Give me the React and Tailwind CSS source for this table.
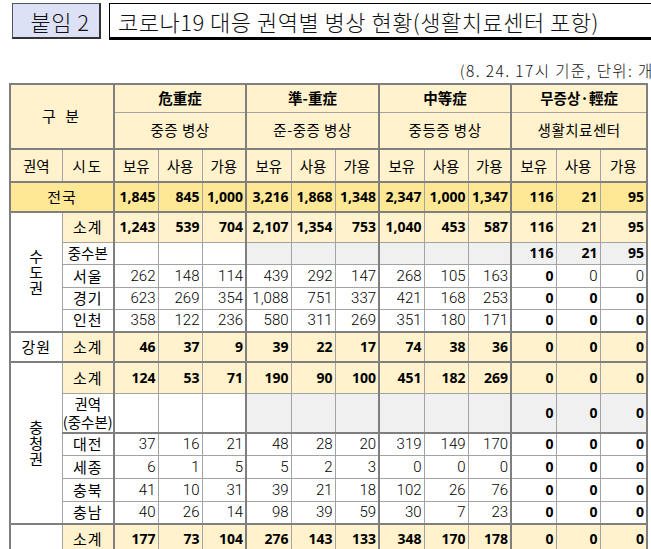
import React from "react";

const KR = "font-['Noto_Sans_CJK_KR',sans-serif]";
const NUMB = "font-['Open_Sans','Noto_Sans_CJK_KR',sans-serif] font-bold text-[14px]";
const NUMT = "font-['Roboto','Noto_Sans_CJK_KR',sans-serif] font-light text-[15px]";

const THICK_L = [
  "border-l-2 border-l-[#7f7f7f]", "", "",
  "border-l-2 border-l-[#7f7f7f]", "", "",
  "border-l-2 border-l-[#7f7f7f]", "", "",
  "border-l-2 border-l-[#7f7f7f]", "", "",
];

const TD = "border border-[#a3a3a3] p-0";
const TOPT = "border-t-2 border-t-[#7f7f7f]";

const HDR = "bg-[#fff2cc]";
const TOT = "bg-[#fee795]";
const SUB = "bg-[#fff2cc]";
const GRAY = "bg-[#f0f0f0]";

function NumCells({ vals, kind, top, boldMask }) {
  return vals.map((v, i) => {
    let bg = "bg-white";
    let bold = true;
    if (kind === "total") bg = TOT;
    else if (kind === "sub") bg = SUB;
    else if (kind === "hq") bg = i < 3 ? "bg-white" : GRAY;
    else {
      bold = boldMask ? boldMask[i] : i >= 9;
    }
    return (
      <td
        key={i}
        className={`${TD} ${THICK_L[i]} ${top ? TOPT : ""} ${bg} text-right pr-[2px] leading-[16px] ${bold ? NUMB : NUMT} text-black`}
      >
        {v}
      </td>
    );
  });
}

const seoulMask = [false, false, false, false, false, false, false, false, false, true, false, false];

function Sido({ children, top }) {
  return (
    <td className={`${TD} ${top ? TOPT : ""} bg-white text-center text-[15px] leading-[16px] tracking-[1px]`}>{children}</td>
  );
}

function Vertical({ chars, extra = "" }) {
  return (
    <div className={`flex flex-col items-center ${extra}`}>
      {chars.map((c, i) => (
        <span key={i} className="block text-[15px] leading-[16px]">{c}</span>
      ))}
    </div>
  );
}

export default function App() {
  return (
    <div className="w-[651px] h-[549px] overflow-hidden bg-white">
      <div className="w-[670px] pt-[3px]">
        {/* Title row */}
        <div className="flex items-start gap-[8px] pl-[12px]">
          <div className="w-[89px] h-[36px] bg-[#dde1f5] border border-[#555] border-r-2 border-b-2 border-r-[#333] border-b-[#333] flex items-center justify-center pl-[8px]">
            <span className={`${KR} font-light text-[22px] leading-none text-[#111] tracking-[0.5px]`}>붙임 2</span>
          </div>
          <div className="flex-1 h-[37px] bg-white border border-black border-b-[3px] flex items-center pl-[8px]">
            <span className={`${KR} font-light text-[22px] leading-none text-[#111] whitespace-nowrap tracking-[0.5px]`}>
              코로나19 대응 권역별 병상 현황(생활치료센터 포항)
            </span>
          </div>
        </div>

        {/* Subtitle */}
        <div className="flex justify-end h-[43px] items-end pb-[5px] pr-[10px]">
          <span className={`${KR} font-light text-[15.5px] leading-none text-[#111] whitespace-nowrap tracking-[1.4px]`}>
            (8. 24. 17시 기준, 단위: 개)
          </span>
        </div>

        {/* Table */}
        <div className="pl-[9px]">
          <table className="border-collapse table-fixed w-[637px] border-2 border-[#7f7f7f]">
            <colgroup>
              <col className="w-[52px]" />
              <col className="w-[52px]" />
              <col className="w-[44px]" />
              <col className="w-[44px]" />
              <col className="w-[44px]" />
              <col className="w-[45px]" />
              <col className="w-[44px]" />
              <col className="w-[44px]" />
              <col className="w-[45px]" />
              <col className="w-[44px]" />
              <col className="w-[43px]" />
              <col className="w-[45px]" />
              <col className="w-[44px]" />
              <col className="w-[47px]" />
            </colgroup>
            <tbody className={`${KR} text-[14.5px] text-black`}>
              <tr className="h-[28px]">
                <td colSpan={2} rowSpan={2} className={`${TD} ${HDR} text-center text-[15px] tracking-[3px]`}>구 분</td>
                <td colSpan={3} className={`${TD} ${HDR} ${THICK_L[0]} text-center font-bold`}>危重症</td>
                <td colSpan={3} className={`${TD} ${HDR} ${THICK_L[3]} text-center font-bold`}>準-重症</td>
                <td colSpan={3} className={`${TD} ${HDR} ${THICK_L[6]} text-center font-bold`}>中等症</td>
                <td colSpan={3} className={`${TD} ${HDR} ${THICK_L[9]} text-center font-bold`}>무증상·輕症</td>
              </tr>
              <tr className="h-[37px]">
                <td colSpan={3} className={`${TD} ${HDR} ${THICK_L[0]} text-center tracking-[0.5px]`}>중증 병상</td>
                <td colSpan={3} className={`${TD} ${HDR} ${THICK_L[3]} text-center tracking-[0.5px]`}>준-중증 병상</td>
                <td colSpan={3} className={`${TD} ${HDR} ${THICK_L[6]} text-center tracking-[0.5px]`}>중등증 병상</td>
                <td colSpan={3} className={`${TD} ${HDR} ${THICK_L[9]} text-center tracking-[0.5px]`}>생활치료센터</td>
              </tr>
              <tr className="h-[33px]">
                <td className={`${TD} ${HDR} ${TOPT} text-center`}>권역</td>
                <td className={`${TD} ${HDR} ${TOPT} text-center tracking-[2px]`}>시도</td>
                {["보유", "사용", "가용", "보유", "사용", "가용", "보유", "사용", "가용", "보유", "사용", "가용"].map((t, i) => (
                  <td key={i} className={`${TD} ${HDR} ${TOPT} ${THICK_L[i]} text-center`}>{t}</td>
                ))}
              </tr>

              {/* 전국 */}
              <tr className="h-[30px]">
                <td colSpan={2} className={`${TD} ${TOT} ${TOPT} text-center text-[15px] tracking-[1px]`}>전국</td>
                <NumCells kind="total" top vals={["1,845", "845", "1,000", "3,216", "1,868", "1,348", "2,347", "1,000", "1,347", "116", "21", "95"]} />
              </tr>

              {/* 수도권 */}
              <tr className="h-[30px]">
                <td rowSpan={5} className={`${TD} ${TOPT} bg-white text-center`}>
                  <Vertical chars={["수", "도", "권"]} />
                </td>
                <td className={`${TD} ${TOPT} ${SUB} text-center text-[15px] tracking-[1px]`}>소계</td>
                <NumCells kind="sub" top vals={["1,243", "539", "704", "2,107", "1,354", "753", "1,040", "453", "587", "116", "21", "95"]} />
              </tr>
              <tr className="h-[22px]">
                <td className={`${TD} bg-white text-center text-[14.5px] leading-[16px]`}>중수본</td>
                <NumCells kind="hq" vals={["", "", "", "", "", "", "", "", "", "116", "21", "95"]} />
              </tr>
              <tr className="h-[23px]">
                <Sido>서울</Sido>
                <NumCells kind="data" boldMask={seoulMask} vals={["262", "148", "114", "439", "292", "147", "268", "105", "163", "0", "0", "0"]} />
              </tr>
              <tr className="h-[22px]">
                <Sido>경기</Sido>
                <NumCells kind="data" vals={["623", "269", "354", "1,088", "751", "337", "421", "168", "253", "0", "0", "0"]} />
              </tr>
              <tr className="h-[23px]">
                <Sido>인천</Sido>
                <NumCells kind="data" vals={["358", "122", "236", "580", "311", "269", "351", "180", "171", "0", "0", "0"]} />
              </tr>

              {/* 강원 */}
              <tr className="h-[30px]">
                <td className={`${TD} ${TOPT} bg-white text-center text-[15px] tracking-[1px]`}>강원</td>
                <td className={`${TD} ${TOPT} ${SUB} text-center text-[15px] tracking-[1px]`}>소계</td>
                <NumCells kind="sub" top vals={["46", "37", "9", "39", "22", "17", "74", "38", "36", "0", "0", "0"]} />
              </tr>

              {/* 충청권 */}
              <tr className="h-[31px]">
                <td rowSpan={6} className={`${TD} ${TOPT} bg-white text-center`}>
                  <Vertical chars={["충", "청", "권"]} />
                </td>
                <td className={`${TD} ${TOPT} ${SUB} text-center text-[15px] tracking-[1px]`}>소계</td>
                <NumCells kind="sub" top vals={["124", "53", "71", "190", "90", "100", "451", "182", "269", "0", "0", "0"]} />
              </tr>
              <tr className="h-[40px]">
                <td className={`${TD} bg-white text-center text-[14.5px] leading-[18px]`}>
                  권역
                  <br />
                  (중수본)
                </td>
                <NumCells kind="hq" vals={["", "", "", "", "", "", "", "", "", "0", "0", "0"]} />
              </tr>
              <tr className="h-[22px]">
                <Sido top>대전</Sido>
                <NumCells kind="data" top vals={["37", "16", "21", "48", "28", "20", "319", "149", "170", "0", "0", "0"]} />
              </tr>
              <tr className="h-[23px]">
                <Sido>세종</Sido>
                <NumCells kind="data" vals={["6", "1", "5", "5", "2", "3", "0", "0", "0", "0", "0", "0"]} />
              </tr>
              <tr className="h-[23px]">
                <Sido>충북</Sido>
                <NumCells kind="data" vals={["41", "10", "31", "39", "21", "18", "102", "26", "76", "0", "0", "0"]} />
              </tr>
              <tr className="h-[23px]">
                <Sido>충남</Sido>
                <NumCells kind="data" vals={["40", "26", "14", "98", "39", "59", "30", "7", "23", "0", "0", "0"]} />
              </tr>

              {/* 호남권 (mostly below the visible area) */}
              <tr className="h-[30px]">
                <td rowSpan={2} className={`${TD} ${TOPT} bg-white text-center`}>
                  <Vertical chars={["호", "남", "권"]} extra="pt-[50px]" />
                </td>
                <td className={`${TD} ${TOPT} ${SUB} text-center text-[15px] tracking-[1px]`}>소계</td>
                <NumCells kind="sub" top vals={["177", "73", "104", "276", "143", "133", "348", "170", "178", "0", "0", "0"]} />
              </tr>
              <tr className="h-[70px]">
                <Sido></Sido>
                <NumCells kind="data" vals={["", "", "", "", "", "", "", "", "", "", "", ""]} />
              </tr>
            </tbody>
          </table>
        </div>
      </div>
    </div>
  );
}
